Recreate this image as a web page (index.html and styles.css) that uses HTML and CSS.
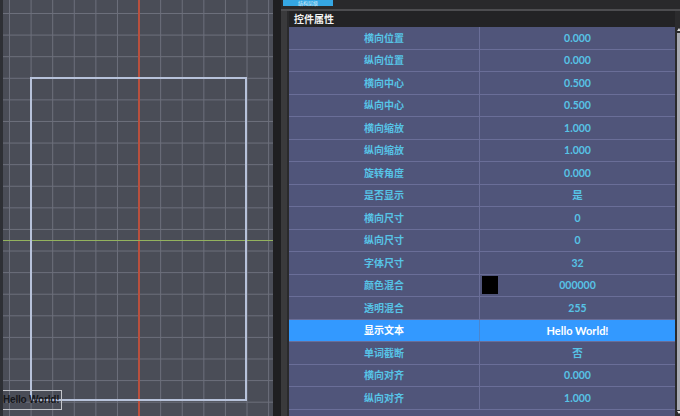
FILE: index.html
```html
<!DOCTYPE html>
<html>
<head>
<meta charset="utf-8">
<link rel="stylesheet" href="styles.css">
</head>
<body>
<div class="app">
  <div class="canvas">
    <div class="axis-v"></div>
    <div class="axis-h"></div>
    <div class="frame"></div>
    <div class="label">Hello World!</div>
  </div>
  <div class="panel">
    <div class="topbar"><div class="tab">结构层级</div></div>
    <div class="rule"></div>
    <div class="body">
      <div class="inner">
        <div class="header">控件属性</div>
        <div class="table">
          <div class="row"><div class="k">横向位置</div><div class="v">0.000</div></div>
          <div class="row"><div class="k">纵向位置</div><div class="v">0.000</div></div>
          <div class="row"><div class="k">横向中心</div><div class="v">0.500</div></div>
          <div class="row"><div class="k">纵向中心</div><div class="v">0.500</div></div>
          <div class="row"><div class="k">横向缩放</div><div class="v">1.000</div></div>
          <div class="row"><div class="k">纵向缩放</div><div class="v">1.000</div></div>
          <div class="row"><div class="k">旋转角度</div><div class="v">0.000</div></div>
          <div class="row"><div class="k">是否显示</div><div class="v">是</div></div>
          <div class="row"><div class="k">横向尺寸</div><div class="v">0</div></div>
          <div class="row"><div class="k">纵向尺寸</div><div class="v">0</div></div>
          <div class="row"><div class="k">字体尺寸</div><div class="v">32</div></div>
          <div class="row"><div class="k">颜色混合</div><div class="v"><span class="swatch"></span>000000</div></div>
          <div class="row"><div class="k">透明混合</div><div class="v">255</div></div>
          <div class="row sel"><div class="k">显示文本</div><div class="v">Hello World!</div></div>
          <div class="row"><div class="k">单词截断</div><div class="v">否</div></div>
          <div class="row"><div class="k">横向对齐</div><div class="v">0.000</div></div>
          <div class="row"><div class="k">纵向对齐</div><div class="v">1.000</div></div>
        </div>
      </div>
      <div class="scroll">
        <div class="arrow up"></div>
        <div class="thumb"></div>
        <div class="arrow down"></div>
      </div>
    </div>
  </div>
</div>
</body>
</html>
```

FILE: styles.css
```css
html, body {
  margin: 0;
  padding: 0;
  background: #2a2a2c;
}
.app {
  width: 680px;
  height: 416px;
  display: flex;
  overflow: hidden;
  font-family: "Lato", "Noto Sans CJK SC", sans-serif;
}
.canvas {
  position: relative;
  width: 270px;
  flex: none;
  border-left: 3px solid #2e3035;
  background-color: #4a4d57;
  background-image:
    linear-gradient(to right, #6c6f7b 1px, transparent 1px),
    linear-gradient(to bottom, #6c6f7b 1px, transparent 1px);
  background-size: 21.6px 21.6px;
  background-position: 6px 13px;
  overflow: hidden;
}
.axis-v {
  position: absolute;
  left: 135px;
  top: 0;
  bottom: 0;
  width: 2px;
  background: #b9503e;
}
.axis-h {
  position: absolute;
  left: 0;
  right: 0;
  top: 240px;
  height: 1px;
  background: #93b25e;
}
.frame {
  position: absolute;
  left: 27px;
  top: 77px;
  width: 213px;
  height: 320px;
  border: 2px solid #b7c2da;
}
.label {
  position: absolute;
  left: 0;
  top: 390px;
  width: 58px;
  height: 18px;
  border: 1px solid #c4c6cc;
  border-left: none;
  font: bold 10px/18px "Liberation Sans", sans-serif;
  color: #15161a;
  white-space: nowrap;
  letter-spacing: -0.2px;
}
.panel {
  flex: 1;
  display: flex;
  flex-direction: column;
  border-left: 8px solid #1f1f21;
  background: #3a3a3c;
}
.topbar {
  height: 9px;
  background: #29292b;
  display: flex;
}
.tab {
  margin-left: 2px;
  width: 50px;
  height: 6px;
  background: #35a7e4;
  color: #d8eefa;
  font-family: "Noto Sans CJK SC", sans-serif;
  font-size: 5px;
  line-height: 6px;
  text-align: center;
}
.rule {
  height: 2px;
  background: #4d4d50;
}
.body {
  flex: 1;
  display: flex;
  padding-left: 6px;
  min-height: 0;
}
.inner {
  width: 386px;
  display: flex;
  flex-direction: column;
  border-left: 2px solid #2a2a2c;
}
.header {
  height: 16px;
  background: #232325;
  color: #f2f2f2;
  font-family: "Noto Sans CJK SC", sans-serif;
  font-weight: bold;
  font-size: 10px;
  line-height: 16px;
  padding-left: 5px;
}
.table {
  flex: 1;
  background: #50557a;
}
.row {
  height: 22.5px;
  display: grid;
  grid-template-columns: 191px 1fr;
  box-sizing: border-box;
  border-bottom: 1px solid #6a6e98;
  color: #57c3e6;
  font-size: 10px;
  font-weight: bold;
}
.row .k, .row .v {
  display: flex;
  align-items: center;
  justify-content: center;
  line-height: 1;
}
.row .k {
  font-family: "Noto Sans CJK SC", sans-serif;
  border-right: 1px solid #6a6e98;
}
.row .v {
  position: relative;
  font-family: "Lato", "Noto Sans CJK SC", sans-serif;
  font-size: 10.5px;
}
.row.sel {
  background: #3399ff;
  color: #fff;
}
.row.sel .k {
  border-right-color: #4a86d0;
}
.row.sel .v {
  font-size: 11px;
}
.swatch {
  position: absolute;
  left: 2px;
  top: 1px;
  width: 16px;
  height: 18px;
  background: #000;
}
.scroll {
  width: 6px;
  display: flex;
  flex-direction: column;
  background: #2b2b2d;
  padding-top: 16px;
}
.thumb {
  flex: 1;
  margin-left: 2px;
  background: #a8aab2;
}
.arrow {
  height: 6px;
  margin-left: 2px;
  position: relative;
}
.arrow::after {
  content: "";
  position: absolute;
  left: 0;
  border-left: 2px solid transparent;
  border-right: 2px solid transparent;
}
.arrow.up::after {
  top: 1px;
  border-bottom: 3px solid #e0e0e0;
}
.arrow.down::after {
  top: 1px;
  border-top: 3px solid #e0e0e0;
}
```
